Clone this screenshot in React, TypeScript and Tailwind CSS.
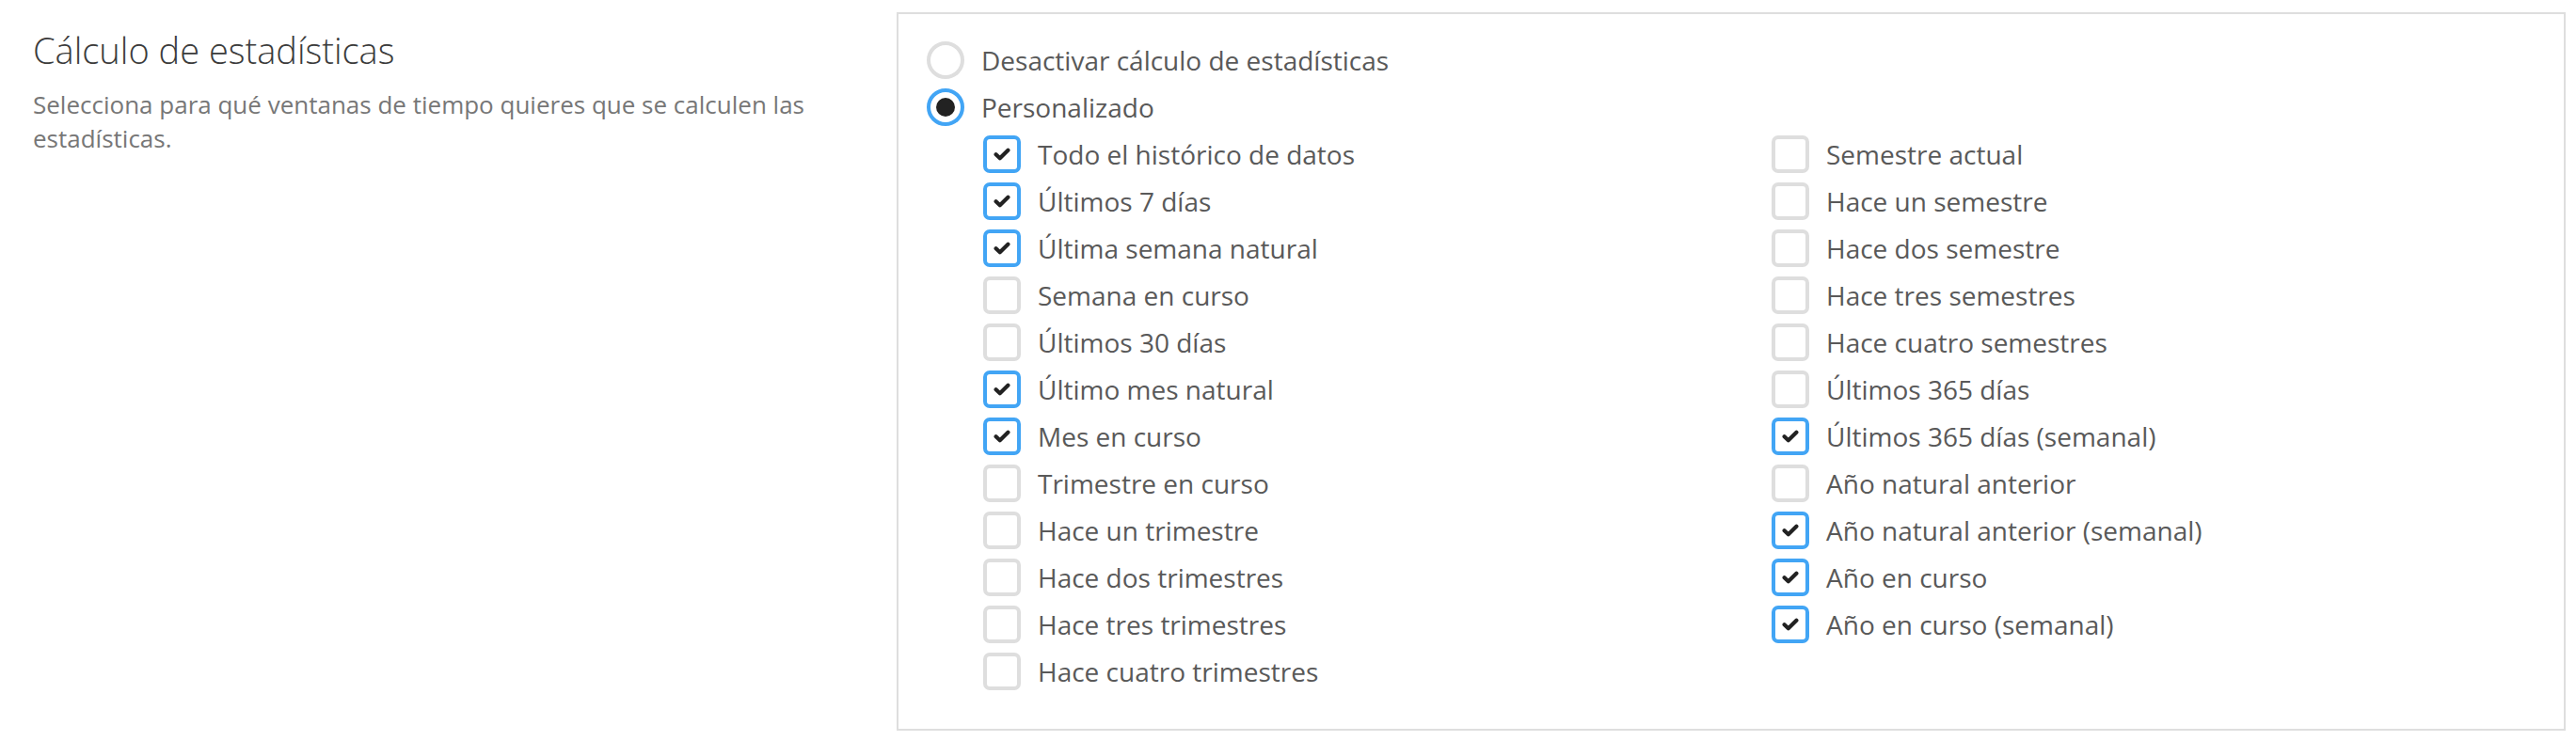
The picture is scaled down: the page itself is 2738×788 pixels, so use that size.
const colLeft = [
  { label: 'Todo el histórico de datos', checked: true },
  { label: 'Últimos 7 días', checked: true },
  { label: 'Última semana natural', checked: true },
  { label: 'Semana en curso', checked: false },
  { label: 'Últimos 30 días', checked: false },
  { label: 'Último mes natural', checked: true },
  { label: 'Mes en curso', checked: true },
  { label: 'Trimestre en curso', checked: false },
  { label: 'Hace un trimestre', checked: false },
  { label: 'Hace dos trimestres', checked: false },
  { label: 'Hace tres trimestres', checked: false },
  { label: 'Hace cuatro trimestres', checked: false },
]

const colRight = [
  { label: 'Semestre actual', checked: false },
  { label: 'Hace un semestre', checked: false },
  { label: 'Hace dos semestre', checked: false },
  { label: 'Hace tres semestres', checked: false },
  { label: 'Hace cuatro semestres', checked: false },
  { label: 'Últimos 365 días', checked: false },
  { label: 'Últimos 365 días (semanal)', checked: true },
  { label: 'Año natural anterior', checked: false },
  { label: 'Año natural anterior (semanal)', checked: true },
  { label: 'Año en curso', checked: true },
  { label: 'Año en curso (semanal)', checked: true },
]

function Tick() {
  return (
    <svg viewBox="0 0 18 14" className="h-[14px] w-[18px]">
      <polyline
        points="2.6,7.2 6.8,11.2 15.4,2.8"
        fill="none"
        stroke="#222"
        strokeWidth="4.2"
        strokeLinecap="round"
        strokeLinejoin="round"
      />
    </svg>
  )
}

function Radio({ label, checked }: { label: string; checked: boolean }) {
  return (
    <div className="flex h-[50px] items-center gap-[18px]">
      <span
        className={`flex h-[40px] w-[40px] flex-none items-center justify-center rounded-full border-4 ${
          checked ? 'border-[#42a5f5]' : 'border-[#dedede]'
        }`}
      >
        {checked && <span className="h-[20px] w-[20px] rounded-full bg-[#222]" />}
      </span>
      <span>{label}</span>
    </div>
  )
}

function Check({ label, checked }: { label: string; checked: boolean }) {
  return (
    <div className="flex h-[50px] items-center gap-[18px]">
      <span
        className={`flex h-[40px] w-[40px] flex-none items-center justify-center rounded-[7px] border-4 ${
          checked ? 'border-[#42a5f5]' : 'border-[#dedede]'
        }`}
      >
        {checked && <Tick />}
      </span>
      <span>{label}</span>
    </div>
  )
}

export default function App() {
  return (
    <div className="flex min-h-[788px] bg-white pl-[35px] pr-[11px] pt-[13px] font-['Open_Sans',sans-serif]">
      {/* Left: section heading */}
      <div className="w-[918px] flex-none pr-[40px]">
        <h2 className="mt-[17px] text-[38px] font-light leading-[46px] text-[#3b3b3b]">
          Cálculo de estadísticas
        </h2>
        <p className="mt-[17px] text-[26px] leading-[36px] text-[#777]">
          Selecciona para qué ventanas de tiempo quieres que se calculen las estadísticas.
        </p>
      </div>

      {/* Right: options panel */}
      <div className="h-[764px] flex-1 border-2 border-[#dedede] pl-[30px] pt-[24px] text-[28px] text-[#595959]">
        <Radio label="Desactivar cálculo de estadísticas" checked={false} />
        <Radio label="Personalizado" checked={true} />
        <div className="ml-[60px] grid grid-cols-[838px_1fr]">
          <div>
            {colLeft.map(o => (
              <Check key={o.label} label={o.label} checked={o.checked} />
            ))}
          </div>
          <div>
            {colRight.map(o => (
              <Check key={o.label} label={o.label} checked={o.checked} />
            ))}
          </div>
        </div>
      </div>
    </div>
  )
}
